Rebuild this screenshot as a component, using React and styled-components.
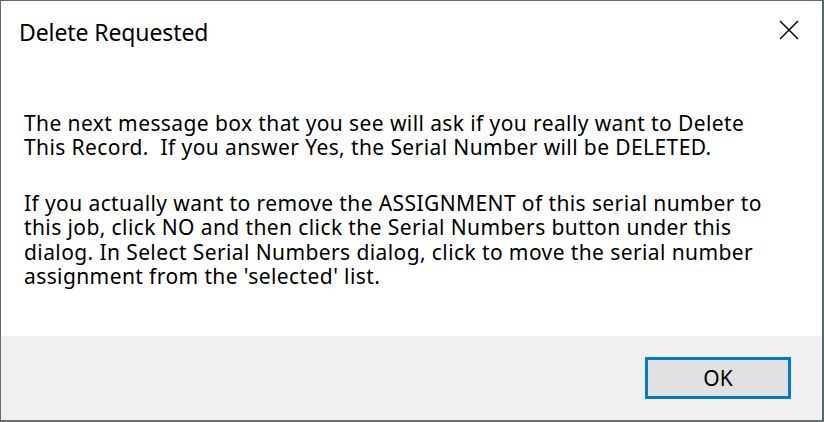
import React from 'react';
import styled, { createGlobalStyle } from 'styled-components';

const GlobalStyle = createGlobalStyle`
  html, body {
    margin: 0;
    padding: 0;
    background: #ffffff;
  }
  body {
    font-family: "Noto Sans", "Open Sans", "Liberation Sans", sans-serif;
  }
`;

const Window = styled.div`
  width: 824px;
  height: 422px;
  box-sizing: border-box;
  display: flex;
  flex-direction: column;
  background: #ffffff;
  border-top: 1px solid #5f6666;
  border-left: 1px solid #6a6a6a;
  border-right: 2px solid #4a6e6c;
  border-bottom: 2px solid #6e6e6e;
`;

const TitleBar = styled.div`
  height: 62px;
  display: flex;
  align-items: center;
  justify-content: space-between;
  padding: 0 0 0 18px;
  box-sizing: border-box;
`;

const Title = styled.div`
  font-size: 23px;
  letter-spacing: -0.1px;
  color: #000000;
`;

const CloseButton = styled.button`
  width: 46px;
  height: 46px;
  border: none;
  background: transparent;
  display: flex;
  align-items: center;
  justify-content: center;
  margin: 0 10px 4px 0;
  padding: 0;
`;

const Content = styled.div`
  flex: 1;
  padding: 48px 20px 0 23px;
`;

const Paragraph = styled.p`
  margin: 0 0 31px 0;
  font-size: 21px;
  letter-spacing: 0.4px;
  line-height: 24.4px;
  color: #000000;
  white-space: pre;
`;

const Footer = styled.div`
  height: 84px;
  background: #f0f0f0;
  display: flex;
  align-items: center;
  justify-content: flex-end;
  padding-right: 31px;
`;

const OkButton = styled.button`
  width: 146px;
  height: 42px;
  box-sizing: border-box;
  border: 3px solid #0078d7;
  background: #e1e1e1;
  font-family: "Noto Sans", "Open Sans", sans-serif;
  font-size: 21px;
  color: #000000;
  padding: 0;
`;

const CloseIcon = () => (
  <svg width="20" height="20" viewBox="0 0 20 20">
    <path d="M1 1 L19 19 M19 1 L1 19" stroke="#000" strokeWidth="1.5" fill="none" />
  </svg>
);

export default function App() {
  return (
    <>
      <GlobalStyle />
      <Window>
        <TitleBar>
          <Title>Delete Requested</Title>
          <CloseButton>
            <CloseIcon />
          </CloseButton>
        </TitleBar>
        <Content>
          <Paragraph>
            {'The next message box that you see will ask if you really want to Delete\nThis Record.  If you answer Yes, the Serial Number will be DELETED.'}
          </Paragraph>
          <Paragraph>
            {"If you actually want to remove the ASSIGNMENT of this serial number to\nthis job, click NO and then click the Serial Numbers button under this\ndialog. In Select Serial Numbers dialog, click to move the serial number\nassignment from the 'selected' list."}
          </Paragraph>
        </Content>
        <Footer>
          <OkButton>OK</OkButton>
        </Footer>
      </Window>
    </>
  );
}
